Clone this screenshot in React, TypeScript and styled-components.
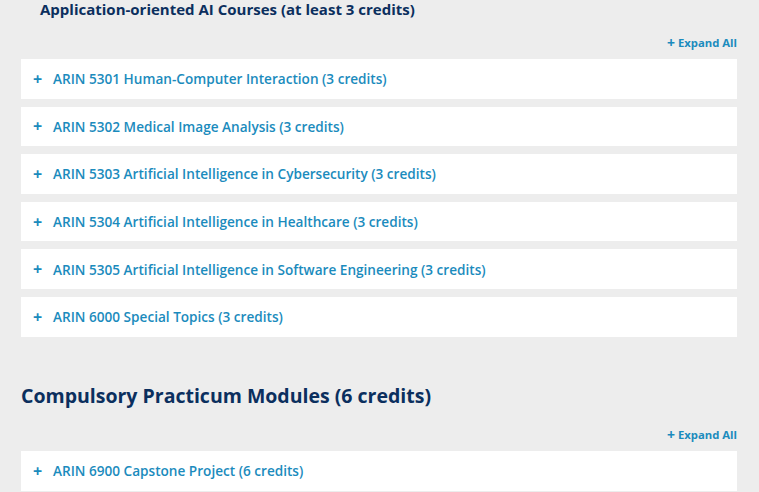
import React from "react";
import styled, { createGlobalStyle } from "styled-components";

const Global = createGlobalStyle`
  html, body { margin: 0; padding: 0; background: #ededed; }
  body { font-family: "Open Sans", "Liberation Sans", sans-serif; overflow: hidden; }
`;

const Page = styled.div`
  padding: 0 22px 0 21px;
  height: 492px;
  overflow: hidden;
`;

const Section = styled.section<{ $top: number }>`
  margin-top: ${(p) => p.$top}px;
`;

const Heading = styled.h3<{ $size: number; $indent: number }>`
  margin: 0;
  padding-left: ${(p) => p.$indent}px;
  font-size: ${(p) => p.$size}px;
  font-weight: 700;
  color: #0b2f5e;
  line-height: 1.2;
`;

const ToolRow = styled.div<{ $top: number }>`
  display: flex;
  justify-content: flex-end;
  margin-top: ${(p) => p.$top}px;
  margin-bottom: 9px;
`;

const ExpandAll = styled.button`
  display: flex;
  align-items: center;
  gap: 3px;
  border: 0;
  background: none;
  padding: 0;
  font-family: inherit;
  font-size: 11.3px;
  font-weight: 700;
  color: #1b8bbd;
  line-height: 14px;
  cursor: pointer;
`;

const ExpandPlus = styled.span`
  font-size: 14px;
  line-height: 14px;
`;

const List = styled.div`
  display: flex;
  flex-direction: column;
  gap: 8px;
`;

const Item = styled.div`
  display: flex;
  align-items: center;
  gap: 11px;
  height: 39.6px;
  padding-left: 12px;
  background: #fff;
  color: #1b8bbd;
  font-size: 13.6px;
  font-weight: 600;
`;

const Plus = styled.span`
  font-weight: 700;
  font-size: 16px;
  line-height: 16px;
  width: 9px;
`;

const Accordion = ({ items }: { items: string[] }) => (
  <List>
    {items.map((t) => (
      <Item key={t}>
        <Plus>+</Plus>
        <span>{t}</span>
      </Item>
    ))}
  </List>
);

const ExpandRow = ({ top }: { top: number }) => (
  <ToolRow $top={top}>
    <ExpandAll>
      <ExpandPlus>+</ExpandPlus>
      Expand All
    </ExpandAll>
  </ToolRow>
);

export default function App() {
  return (
    <>
      <Global />
      <Page>
        <Section $top={0}>
          <Heading $size={15} $indent={19}>
            Application-oriented AI Courses (at least 3 credits)
          </Heading>
          <ExpandRow top={18} />
          <Accordion
            items={[
              "ARIN 5301 Human-Computer Interaction (3 credits)",
              "ARIN 5302 Medical Image Analysis (3 credits)",
              "ARIN 5303 Artificial Intelligence in Cybersecurity (3 credits)",
              "ARIN 5304 Artificial Intelligence in Healthcare (3 credits)",
              "ARIN 5305 Artificial Intelligence in Software Engineering (3 credits)",
              "ARIN 6000 Special Topics (3 credits)",
            ]}
          />
        </Section>
        <Section $top={47}>
          <Heading $size={19.5} $indent={0}>
            Compulsory Practicum Modules (6 credits)
          </Heading>
          <ExpandRow top={21} />
          <Accordion items={["ARIN 6900 Capstone Project (6 credits)"]} />
        </Section>
      </Page>
    </>
  );
}
